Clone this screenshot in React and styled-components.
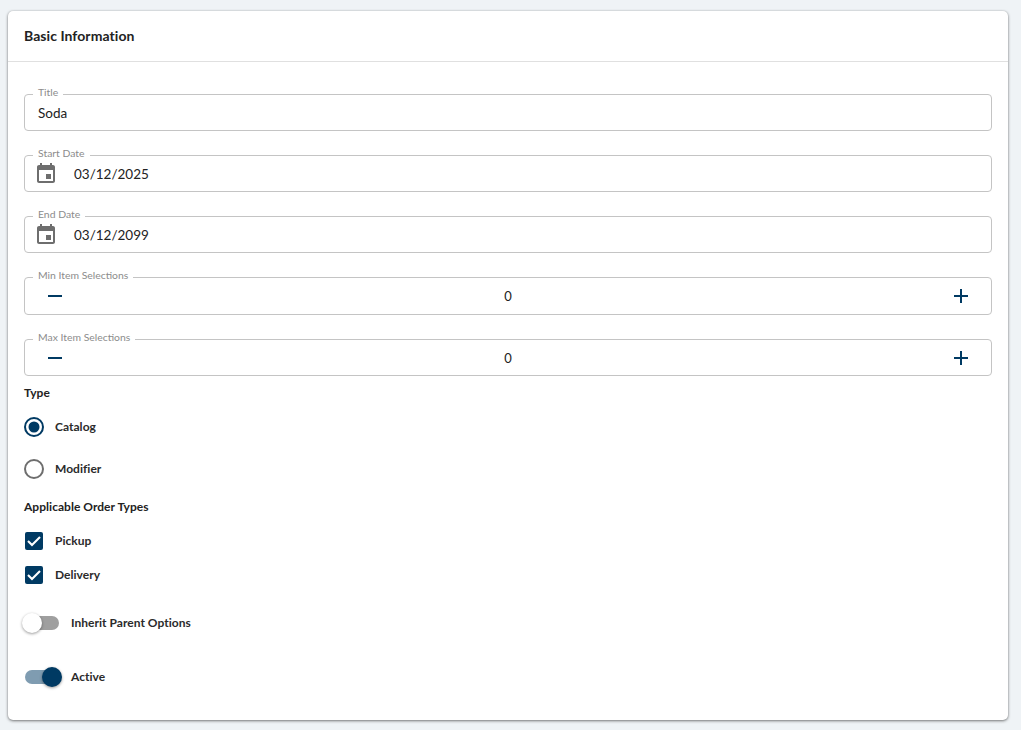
import React from 'react';
import styled, { createGlobalStyle } from 'styled-components';

const GlobalStyle = createGlobalStyle`
  html, body {
    margin: 0;
    padding: 0;
    background: #eff3f6;
    font-family: Lato, "Liberation Sans", sans-serif;
  }
`;

const Page = styled.div`
  padding: 11px 13px 10px 8px;
`;

const Card = styled.section`
  background: #fff;
  border-radius: 5px;
  height: 709px;
  box-sizing: border-box;
  box-shadow: 0 1px 3px rgba(0, 0, 0, 0.5), 0 0 2px rgba(0, 0, 0, 0.12);
`;

const CardHeader = styled.h2`
  margin: 0;
  height: 51px;
  box-sizing: border-box;
  padding: 0 16px 2px;
  display: flex;
  align-items: center;
  font-size: 14px;
  font-weight: 700;
  letter-spacing: 0.06px;
  color: #222;
  border-bottom: 1px solid #e0e0e0;
`;

const CardBody = styled.div`
  padding: 26px 16px 0;
  display: flex;
  flex-direction: column;
`;

const Field = styled.fieldset`
  margin: 0 0 ${(p) => p.$gap}px;
  padding: 0;
  min-width: 0;
  border: 1px solid #c4c4c4;
  border-radius: 4px;
`;

const Legend = styled.legend`
  margin-left: 8px;
  padding: 0 5px;
  height: 12px;
  line-height: 8px;
  font-size: 10.4px;
  color: #8c8c8c;
`;

const FieldRow = styled.div`
  height: ${(p) => p.$height}px;
  box-sizing: border-box;
  padding: 0 ${(p) => p.$inset}px ${(p) => p.$lift}px;
  display: flex;
  align-items: center;
`;

const Value = styled.span`
  font-size: 13.5px;
  color: #222;
`;

const DateValue = styled(Value)`
  margin: 2px 0 0 16px;
`;

const CalendarIcon = styled.svg`
  width: 24px;
  height: 24px;
  fill: #6e6e6e;
  flex: none;
`;

const StepValue = styled(Value)`
  flex: 1;
  text-align: center;
  font-size: 13px;
`;

const StepButton = styled.svg`
  width: 24px;
  height: 24px;
  fill: none;
  stroke: #003a63;
  stroke-width: 2;
  flex: none;
`;

const GroupLabel = styled.div`
  font-size: 12px;
  font-weight: 700;
  letter-spacing: 0.03px;
  color: #222;
  line-height: 16px;
  margin: ${(p) => p.$top}px 0 ${(p) => p.$bottom}px;
`;

const OptionRow = styled.label`
  display: flex;
  align-items: center;
  gap: ${(p) => p.$gap}px;
  height: ${(p) => p.$height}px;
  font-size: 12px;
  font-weight: 700;
  letter-spacing: 0.03px;
  color: #2b2b2b;
`;

const OptionText = styled.span`
  margin-top: -2px;
`;

const ToggleGroup = styled.div`
  margin-top: 4px;
`;

const Radio = styled.span`
  width: 20px;
  height: 20px;
  box-sizing: border-box;
  border-radius: 50%;
  border: 2px solid ${(p) => (p.$checked ? '#003a63' : '#6e6e6e')};
  display: flex;
  align-items: center;
  justify-content: center;
  flex: none;

  &::after {
    content: '';
    width: 10px;
    height: 10px;
    border-radius: 50%;
    transform: scale(1.1);
    background: ${(p) => (p.$checked ? '#003a63' : 'transparent')};
  }
`;

const CheckBox = styled.svg`
  width: 18px;
  height: 18px;
  margin-left: 1px;
  flex: none;
`;

const SwitchTrack = styled.span`
  position: relative;
  width: 34px;
  height: 14px;
  margin-left: 1px;
  border-radius: 7px;
  background: ${(p) => (p.$on ? '#7f9cb1' : '#9f9f9f')};
  flex: none;
`;

const SwitchThumb = styled.span`
  position: absolute;
  top: -3px;
  left: ${(p) => (p.$on ? '17px' : '-3px')};
  width: 20px;
  height: 20px;
  border-radius: 50%;
  background: ${(p) => (p.$on ? '#003a63' : '#fff')};
  box-shadow: 0 1px 3px rgba(0, 0, 0, 0.4);
`;

const Calendar = () => (
  <CalendarIcon viewBox="0 0 24 24">
    <path d="M19 4h-1V2h-2v2H8V2H6v2H5c-1.1 0-2 .9-2 2v14c0 1.1.9 2 2 2h14c1.1 0 2-.9 2-2V6c0-1.1-.9-2-2-2zm0 16H5V9h14v11zm-7-7h5v5h-5z" />
  </CalendarIcon>
);

const Minus = () => (
  <StepButton viewBox="0 0 24 24">
    <path d="M5 12h14" />
  </StepButton>
);

const Plus = () => (
  <StepButton viewBox="0 0 24 24">
    <path d="M5 12h14M12 5v14" />
  </StepButton>
);

const Checked = () => (
  <CheckBox viewBox="0 0 18 18">
    <rect width="18" height="18" rx="2" fill="#003a63" />
    <path d="M3 9l4 4 8-8" fill="none" stroke="#fff" strokeWidth="2.1" />
  </CheckBox>
);

function TextField({ label, value }) {
  return (
    <Field $gap={18}>
      <Legend>{label}</Legend>
      <FieldRow $height={30} $inset={13} $lift={4}>
        <Value>{value}</Value>
      </FieldRow>
    </Field>
  );
}

function DateField({ label, value }) {
  return (
    <Field $gap={18}>
      <Legend>{label}</Legend>
      <FieldRow $height={30} $inset={9} $lift={6}>
        <Calendar />
        <DateValue>{value}</DateValue>
      </FieldRow>
    </Field>
  );
}

function StepperField({ label, value, gap, height, lift }) {
  return (
    <Field $gap={gap}>
      <Legend>{label}</Legend>
      <FieldRow $height={height} $inset={18} $lift={lift}>
        <Minus />
        <StepValue>{value}</StepValue>
        <Plus />
      </FieldRow>
    </Field>
  );
}

function Toggle({ label, on }) {
  return (
    <OptionRow $height={54} $gap={12}>
      <SwitchTrack $on={on}>
        <SwitchThumb $on={on} />
      </SwitchTrack>
      <OptionText>{label}</OptionText>
    </OptionRow>
  );
}

export default function App() {
  return (
    <Page>
      <GlobalStyle />
      <Card>
        <CardHeader>Basic Information</CardHeader>
        <CardBody>
          <TextField label="Title" value="Soda" />
          <DateField label="Start Date" value="03/12/2025" />
          <DateField label="End Date" value="03/12/2099" />
          <StepperField label="Min Item Selections" value="0" gap={18.5} height={30.5} lift={5} />
          <StepperField label="Max Item Selections" value="0" gap={0} height={29.5} lift={4} />
          <GroupLabel $top={9.5} $bottom={5}>Type</GroupLabel>
          <OptionRow $height={42} $gap={11}>
            <Radio $checked />
            <OptionText>Catalog</OptionText>
          </OptionRow>
          <OptionRow $height={42} $gap={11}>
            <Radio />
            <OptionText>Modifier</OptionText>
          </OptionRow>
          <GroupLabel $top={9} $bottom={9}>Applicable Order Types</GroupLabel>
          <OptionRow $height={34} $gap={12}>
            <Checked />
            <OptionText>Pickup</OptionText>
          </OptionRow>
          <OptionRow $height={34} $gap={12}>
            <Checked />
            <OptionText>Delivery</OptionText>
          </OptionRow>
          <ToggleGroup>
            <Toggle label="Inherit Parent Options" />
            <Toggle label="Active" on />
          </ToggleGroup>
        </CardBody>
      </Card>
    </Page>
  );
}
